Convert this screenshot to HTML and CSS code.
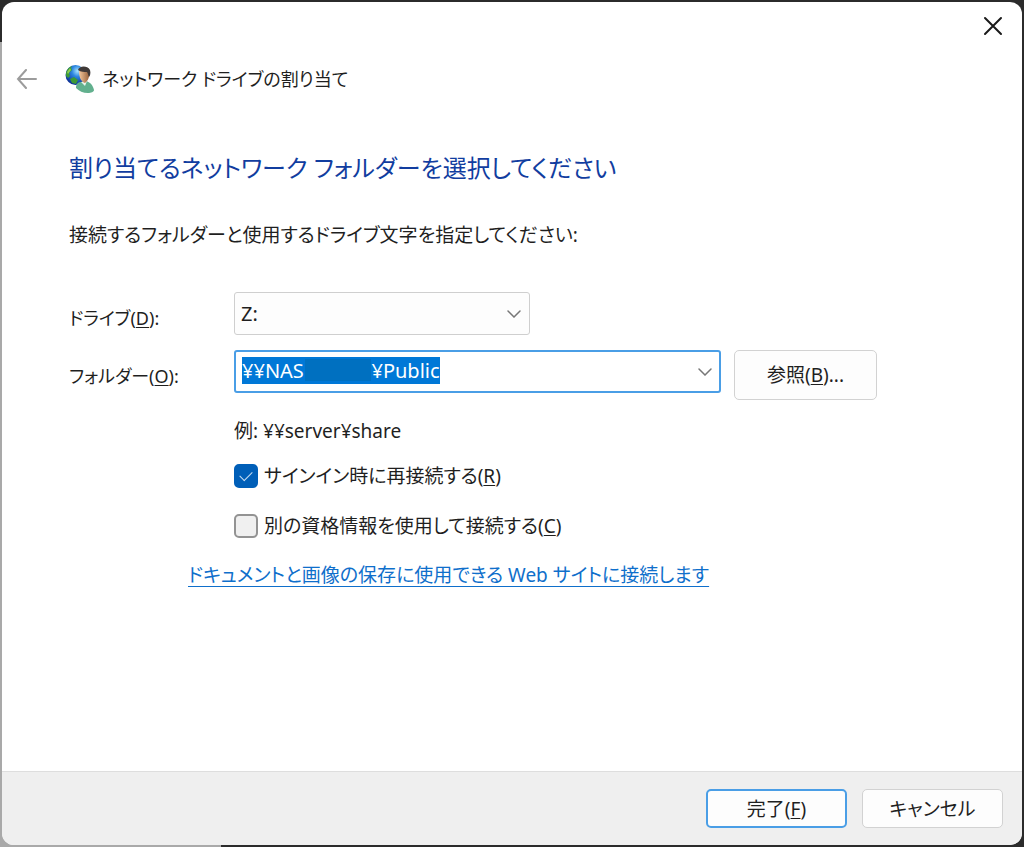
FILE: index.html
```html
<!DOCTYPE html>
<html lang="ja">
<head>
    <meta charset="UTF-8">
    <meta name="viewport" content="width=device-width, initial-scale=1">
    <title>ネットワーク ドライブの割り当て</title>
    <link rel="stylesheet" href="styles.css">
</head>
<body>
    <form class="window">
        <div class="title-bar">
            <button type="button" class="close-button" aria-label="閉じる">
                <svg width="20" height="20" viewBox="0 0 20 20"><path d="M2 2l16 16M18 2L2 18" /></svg>
            </button>
        </div>

        <header class="header">
            <button type="button" class="back-button" aria-label="戻る">
                <svg width="22" height="20" viewBox="0 0 22 20"><path d="M20 10H2M10 1L2 10l8 9" /></svg>
            </button>
            <svg class="app-icon" width="30" height="30" viewBox="0 0 30 30">
                <defs>
                    <radialGradient id="sea" cx="0.6" cy="0.3" r="0.7">
                        <stop offset="0" stop-color="#a8e4ff" />
                        <stop offset="0.4" stop-color="#2d86e0" />
                        <stop offset="1" stop-color="#0b2f96" />
                    </radialGradient>
                    <linearGradient id="face" x1="0" x2="1">
                        <stop offset="0" stop-color="#f3c79c" />
                        <stop offset="1" stop-color="#97613a" />
                    </linearGradient>
                </defs>
                <circle cx="10.5" cy="11" r="10" fill="url(#sea)" />
                <path d="M1 9C2 5 4 3 7 2L6 4 7 6 4 9 5 12 3 14 1 12zM5 15l4-2 4 3-2 4-4-1z" fill="#3c9a35" />
                <path d="M2 8l3-4 1 2-3 4z" fill="#8fce52" />
                <path d="M11 24c0-4 2-6 5-6l5-1c4 1 7 4 8 9 0 2-3 3-6 3-5 0-9-2-12-5z" fill="#62b08e" />
                <path d="M16 18l4 4 2-5z" fill="#e9f4ed" />
                <path d="M14 7c0-3 9-3 10 1 1 4-1 9-4 11-4-1-6-6-6-12z" fill="url(#face)" />
                <path d="M13 6c1-4 9-5 12 0 1 3 0 6-1 7-1-2-1-4-2-5-3 0-6 0-9-2z" fill="#403a38" />
            </svg>
            <span class="header-title">ネットワーク ドライブの割り当て</span>
        </header>

        <main class="content">
            <h1>割り当てるネットワーク フォルダーを選択してください</h1>
            <p class="lead">接続するフォルダーと使用するドライブ文字を指定してください:</p>

            <div class="fields">
                <label for="drive">ドライブ(<u>D</u>):</label>
                <div class="combo drive">
                    <select id="drive" accesskey="d">
                        <option>Z:</option>
                    </select>
                    <svg class="chevron" width="14" height="8" viewBox="0 0 14 8"><path d="M1 1l6 6 6-6" /></svg>
                </div>

                <label for="folder">フォルダー(<u>O</u>):</label>
                <div class="folder-row">
                    <div class="combo folder">
                        <input type="text" id="folder" accesskey="o" spellcheck="false" value="¥¥NAS&nbsp;&nbsp;&nbsp;&nbsp;&nbsp;&nbsp;&nbsp;&nbsp;&nbsp;&nbsp;&nbsp;&nbsp;&nbsp;¥Public">
                        <span class="mask"></span>
                        <svg class="chevron" width="14" height="8" viewBox="0 0 14 8"><path d="M1 1l6 6 6-6" /></svg>
                    </div>
                    <button type="button" class="browse-button" accesskey="b">参照(<u>B</u>)...</button>
                </div>
            </div>

            <div class="options">
                <p class="example">例: ¥¥server¥share</p>
                <label class="check"><input type="checkbox" accesskey="r" checked><span>サインイン時に再接続する(<u>R</u>)</span></label>
                <label class="check"><input type="checkbox" accesskey="c"><span>別の資格情報を使用して接続する(<u>C</u>)</span></label>
            </div>

            <a class="site-link" href="#">ドキュメントと画像の保存に使用できる Web サイトに接続します</a>
        </main>

        <footer class="footer">
            <button type="submit" class="finish-button" accesskey="f">完了(<u>F</u>)</button>
            <button type="button" class="cancel-button">キャンセル</button>
        </footer>
    </form>

<script>
    const folder = document.getElementById('folder');
    folder.focus();
    folder.select();
</script>
</body>
</html>
```

FILE: styles.css
```css
* {
    box-sizing: border-box;
}
body {
    margin: 0;
    padding: 2px;
    min-height: 100vh;
    display: flex;
    background:
        linear-gradient(#a9a9a9, #a9a9a9) 0 42px / 2px 100% no-repeat,
        linear-gradient(#a9a9a9, #a9a9a9) 0 100% / 221px 12px no-repeat,
        #2b2b2b;
    font-family: "Noto Sans", "Noto Sans CJK JP", sans-serif;
    font-size: 19px;
    line-height: 30px;
    font-feature-settings: "palt";
    color: #1f1f1f;
}
button, input, select {
    font: inherit;
    font-feature-settings: inherit;
    color: inherit;
    margin: 0;
}
button {
    padding: 0;
    border: 1px solid #d2d2d2;
    border-radius: 5px;
    background-color: #fdfdfd;
}
h1, p {
    margin: 0;
    font-weight: normal;
}
svg path {
    stroke-linecap: round;
}
u {
    text-underline-offset: 2px;
}
.window {
    flex: 1;
    display: flex;
    flex-direction: column;
    background-color: #fff;
    border-radius: 12px;
    overflow: hidden;
}
.title-bar {
    display: flex;
    justify-content: flex-end;
}
.close-button {
    width: 58px;
    height: 48px;
    border: none;
    background: none;
}
.close-button svg {
    display: block;
    margin: 0 auto;
    fill: none;
    stroke: #1a1a1a;
    stroke-width: 2;
}
.header {
    display: flex;
    align-items: center;
    height: 58px;
    padding-left: 14px;
}
.header-title {
    font-size: 18px;
}
.back-button {
    width: 22px;
    border: none;
    background: none;
}
.back-button svg {
    display: block;
    fill: none;
    stroke: #9c9c9c;
    stroke-width: 2;
}
.app-icon {
    margin: 0 7px 0 27px;
}
.content {
    flex: 1;
    padding: 42px 67px 24px;
}
h1 {
    font-size: 24px;
    line-height: 36px;
    color: #113d9f;
}
.lead {
    margin: 34px 0 42px;
}
.fields {
    display: grid;
    grid-template-columns: 157px 1fr;
    gap: 8px;
}
.fields label {
    font-size: 18px;
    line-height: 52px;
    height: 50px;
}
.combo {
    position: relative;
    height: 43px;
}
.combo select, .combo input {
    display: block;
    width: 100%;
    height: 100%;
    padding: 0 6px;
    border: 1px solid #cfcfcf;
    border-radius: 3px;
    background-color: #fdfdfd;
    font-size: 20px;
    outline: none;
    appearance: none;
}
.combo input {
    padding-bottom: 2px;
    border: 2px solid #4a9ee6;
    background-color: #fff;
}
.combo input::selection {
    background-color: #0078d7;
    color: #fff;
}
.drive {
    width: 296px;
}
.folder {
    flex: 0 1 487px;
}
.chevron {
    position: absolute;
    top: 18px;
    right: 9px;
    fill: none;
    stroke: #777;
    pointer-events: none;
}
.drive .chevron, .folder .chevron {
    stroke-width: 1.5;
}
.mask {
    position: absolute;
    top: 9px;
    left: 71px;
    width: 66px;
    height: 22px;
    background-color: #0070c0;
    pointer-events: none;
}
.folder-row {
    display: flex;
    gap: 13px;
}
.browse-button {
    width: 143px;
    height: 50px;
}
.options {
    display: grid;
    justify-items: start;
    padding: 16px 0 19px 165px;
}
.check {
    display: flex;
    align-items: center;
    gap: 6px;
    margin-top: 15px;
}
.check + .check {
    margin-top: 20px;
}
.check input {
    appearance: none;
    width: 24px;
    height: 24px;
    border: 2px solid #939393;
    border-radius: 5px;
    background-color: #f0f0f0;
}
.check input:checked {
    display: grid;
    place-items: center;
    border-color: #005fb8;
    background-color: #005fb8;
}
.check input:checked::before {
    content: "";
    width: 11px;
    height: 6px;
    margin-bottom: 3px;
    border: solid #c6ddf2;
    border-width: 0 0 1px 1px;
    transform: rotate(-45deg);
}
.site-link {
    margin-left: 119px;
    color: #0f6fcb;
    text-decoration-thickness: 1px;
    text-underline-offset: 4px;
}
.footer {
    display: flex;
    justify-content: flex-end;
    gap: 15px;
    padding: 17px 19px;
    border-top: 1px solid #dedede;
    background-color: #efefef;
}
.footer button {
    width: 141px;
    height: 39px;
}
.footer .finish-button {
    border: 2px solid #4a9ee6;
}
```
